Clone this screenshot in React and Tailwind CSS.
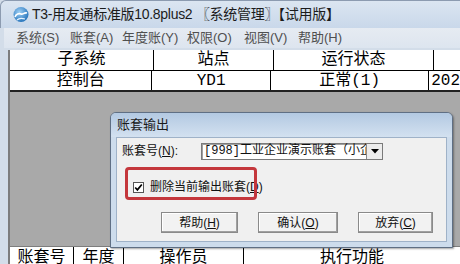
import React from 'react';

const cjk = "font-['Liberation_Sans','Noto_Sans_CJK_SC',sans-serif]";
const mono = "font-['Liberation_Mono','Noto_Sans_CJK_SC',monospace]";

function AppIcon() {
  return (
    <svg width="18" height="17" viewBox="0 0 18 17">
      <defs>
        <radialGradient id="ball" cx="40%" cy="35%" r="70%">
          <stop offset="0%" stopColor="#9fd0f5" />
          <stop offset="100%" stopColor="#1f6fb8" />
        </radialGradient>
      </defs>
      <circle cx="9" cy="8.5" r="7.5" fill="url(#ball)" />
      <path d="M3 11c1-3 4-4 6-3s3-2 6-1" stroke="#fff" strokeWidth="1.6" fill="none" />
      <path d="M5 14c2-2 5-2 8-1" stroke="#e8f4ff" strokeWidth="1.2" fill="none" />
    </svg>
  );
}

function Btn({ label, k, className }) {
  return (
    <div
      className={`h-[21px] flex items-center justify-center bg-[#f2f2f2] border border-[#8a8a8a] shadow-[inset_-1px_-1px_0_#a0a0a0,inset_1px_1px_0_#ffffff] text-[12px] text-[#111] ${className}`}
    >
      {label}(<span className="underline">{k}</span>)
    </div>
  );
}

function Cell({ children, className }) {
  return (
    <div className={`flex items-center justify-center border-r border-black ${className}`}>
      {children}
    </div>
  );
}

export default function App() {
  const menus = [
    ['系统', 'S', 'w-[54px]'],
    ['账套', 'A', 'w-[52px]'],
    ['年度账', 'Y', 'w-[65px]'],
    ['权限', 'O', 'w-[57px]'],
    ['视图', 'V', 'w-[54px]'],
    ['帮助', 'H', 'w-[54px]'],
  ];

  return (
    <div className={`relative w-[460px] h-[264px] overflow-hidden bg-[#d3dde9] ${cjk}`}>
      {/* Title bar */}
      <div className="h-[28px] flex items-center pl-[11px] gap-[2px] bg-gradient-to-b from-[#dbe5f1] to-[#c9d8ea] rounded-tl-[6px] border-l border-t border-[#8c9bb0]">
        <AppIcon />
        <span className="text-[14px] text-[#1b1b1b] tracking-[-0.3px]">
          T3-用友通标准版10.8plus2 〖系统管理〗【试用版】
        </span>
      </div>

      {/* Menu bar */}
      <div className="h-[20px] ml-[4px] flex items-center pl-[12px] bg-gradient-to-b from-[#e6ebf2] to-[#dde5ef] text-[13px] text-[#4f4f4f]">
        {menus.map(([t, k, w]) => (
          <span key={k} className={w}>
            {t}({k})
          </span>
        ))}
      </div>

      {/* Client area */}
      <div className="ml-[8px] mt-[2px] h-[196px] flex flex-col border-l-2 border-[#7d7d7d] bg-[#a9a9a9]">
        <div className={`bg-white text-[16px] text-black ${mono}`}>
          <div className="h-[21px] flex border-b border-black">
            <Cell className="w-[144px]">子系统</Cell>
            <Cell className="w-[120px]">站点</Cell>
            <Cell className="w-[160px]">运行状态</Cell>
            <div className="flex-1" />
          </div>
          <div className="h-[21px] flex border-b-2 border-[#222]">
            <Cell className="w-[144px]">控制台</Cell>
            <Cell className="w-[120px]">YD1</Cell>
            <Cell className="w-[160px]">正常(1)</Cell>
            <div className="flex-1 flex items-center pl-[2px]">202</div>
          </div>
        </div>
        <div className="flex-1" />
      </div>

      {/* Bottom table header */}
      <div className={`ml-[8px] h-[18px] flex bg-white border-l-2 border-t border-[#7d7d7d] text-[16px] leading-[20px] text-black ${mono}`}>
        <div className="w-[64px] border-r border-black flex justify-center pt-[1px]">账套号</div>
        <div className="w-[50px] border-r border-black flex justify-center pt-[1px]">年度</div>
        <div className="w-[120px] border-r border-black flex justify-center pt-[1px]">操作员</div>
        <div className="flex-1 flex justify-center pt-[1px]">执行功能</div>
      </div>

      {/* Dialog */}
      <div className="absolute left-[110px] top-[112px] w-[343px] h-[136px] flex flex-col border border-[#5f6f84] rounded-t-[6px] bg-[#cddcec] shadow-[1px_1px_2px_rgba(0,0,0,0.35)]">
        <div className="h-[24px] flex items-center pl-[6px] text-[13px] text-[#1a1a1a] bg-gradient-to-b from-[#b3c9e2] to-[#d3e1f0] rounded-t-[5px]">
          账套输出
        </div>
        <div className="flex-1 mx-[5px] mb-[5px] bg-[#f0f0f0] border border-[#9fb2c8] text-[12px] text-[#111] flex flex-col">
          <div className="flex items-center pl-[5px] pt-[4px]">
            <span className="w-[79px]">
              账套号(<span className="underline">N</span>):
            </span>
            <div className="w-[182px] h-[17px] flex items-center bg-white border border-[#7a7a7a] shadow-[inset_1px_1px_0_#a0a0a0]">
              <span className={`flex-1 overflow-hidden whitespace-nowrap pl-[2px] ${mono} text-[12px]`}>[998]工业企业演示账套（小企</span>
              <div className="w-[16px] h-[15px] flex items-center justify-center bg-[#ececec] border-l border-[#8a8a8a]">
                <svg width="8" height="5" viewBox="0 0 8 5">
                  <path d="M0 0h8L4 4.5z" fill="#000" />
                </svg>
              </div>
            </div>
          </div>

          <div className="flex items-center pl-[16px] mt-[18px] gap-[6px]">
            <div className="w-[11px] h-[11px] bg-white border border-[#555] flex items-center justify-center">
              <svg width="9" height="9" viewBox="0 0 9 9">
                <path d="M1.2 4.5l2.2 2.4 4.4-5.4" stroke="#000" strokeWidth="1.7" fill="none" />
              </svg>
            </div>
            <span className="whitespace-nowrap">
              删除当前输出账套(<span className="underline">D</span>)
            </span>
          </div>

          <div className="flex pl-[44px] mt-[16px] gap-[20px]">
            <Btn label="帮助" k="H" className="w-[77px]" />
            <Btn label="确认" k="O" className="w-[80px]" />
            <Btn label="放弃" k="C" className="w-[75px]" />
          </div>
        </div>
      </div>

      {/* Red highlight */}
      <div className="absolute left-[125px] top-[167px] w-[132px] h-[33px] border-[3px] border-[#c4373c] rounded-[4px]" />
    </div>
  );
}
